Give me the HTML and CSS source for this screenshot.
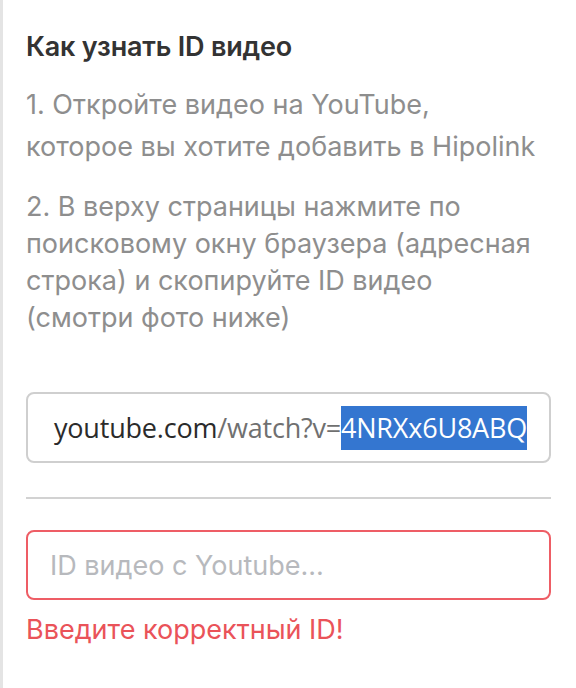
FILE: index.html
```html
<!DOCTYPE html>
<html lang="ru">
<head>
  <meta charset="UTF-8">
  <meta name="viewport" content="width=device-width, initial-scale=1.0">
  <title>Как узнать ID видео</title>
  <link rel="stylesheet" href="styles.css">
</head>
<body>

  <div class="panel">
    <h2>Как узнать ID видео</h2>
    <p class="step step-first">1. Откройте видео на YouTube,<br>которое вы хотите добавить в Hipolink</p>
    <p class="step">2. В верху страницы нажмите по<br>поисковому окну браузера (адресная<br>строка) и скопируйте ID видео<br>(смотри фото ниже)</p>

    <div class="url-example">
      <span class="url-host">youtube.com</span><span class="url-path">/watch?v=</span><span class="url-id">4NRXx6U8ABQ</span>
    </div>

    <hr class="divider">

    <input type="text" class="id-input" placeholder="ID видео с Youtube...">
    <div class="error">Введите корректный ID!</div>
  </div>

</body>
</html>
```

FILE: styles.css
```css
    body {
      margin: 0;
      font-family: 'Inter', 'Noto Sans', sans-serif;
      background-color: #fff;
      color: #333;
    }

    .panel {
      min-height: 688px;
      box-sizing: border-box;
      border-left: 3px solid #e4e4e4;
      padding: 30px 25px 0 23px;
    }

    .panel h2 {
      margin: 0;
      font-size: 27px;
      line-height: 34px;
      font-weight: 600;
      color: #333;
      letter-spacing: -0.2px;
    }

    .step {
      margin: 20px 0 0;
      font-size: 27px;
      line-height: 37px;
      color: #8e8e8e;
      white-space: nowrap;
    }

    .step-first {
      line-height: 42px;
    }

    .url-example {
      margin-top: 56px;
      height: 71px;
      box-sizing: border-box;
      border: 2px solid #cfcfcf;
      border-radius: 8px;
      display: flex;
      align-items: center;
      padding-left: 26px;
      font-family: 'Open Sans', sans-serif;
      font-size: 27px;
      letter-spacing: -0.2px;
      white-space: nowrap;
    }

    .url-host {
      color: #2b2b2b;
    }

    .url-path {
      color: #707070;
    }

    .url-id {
      display: inline-block;
      background: #3476d0;
      color: #fff;
      line-height: 44px;
    }

    .divider {
      margin: 34px 0 0;
      border: none;
      border-top: 2px solid #d2d2d2;
    }

    .id-input {
      display: block;
      width: 100%;
      height: 70px;
      box-sizing: border-box;
      margin-top: 31px;
      padding: 0 22px;
      border: 2px solid #ee5d65;
      border-radius: 8px;
      font-family: 'Inter', 'Noto Sans', sans-serif;
      font-size: 27px;
      color: #333;
      outline: none;
    }

    .id-input::placeholder {
      color: #b7b9bd;
    }

    .error {
      margin-top: 15px;
      font-size: 27px;
      line-height: 30px;
      color: #ea5359;
    }
```
